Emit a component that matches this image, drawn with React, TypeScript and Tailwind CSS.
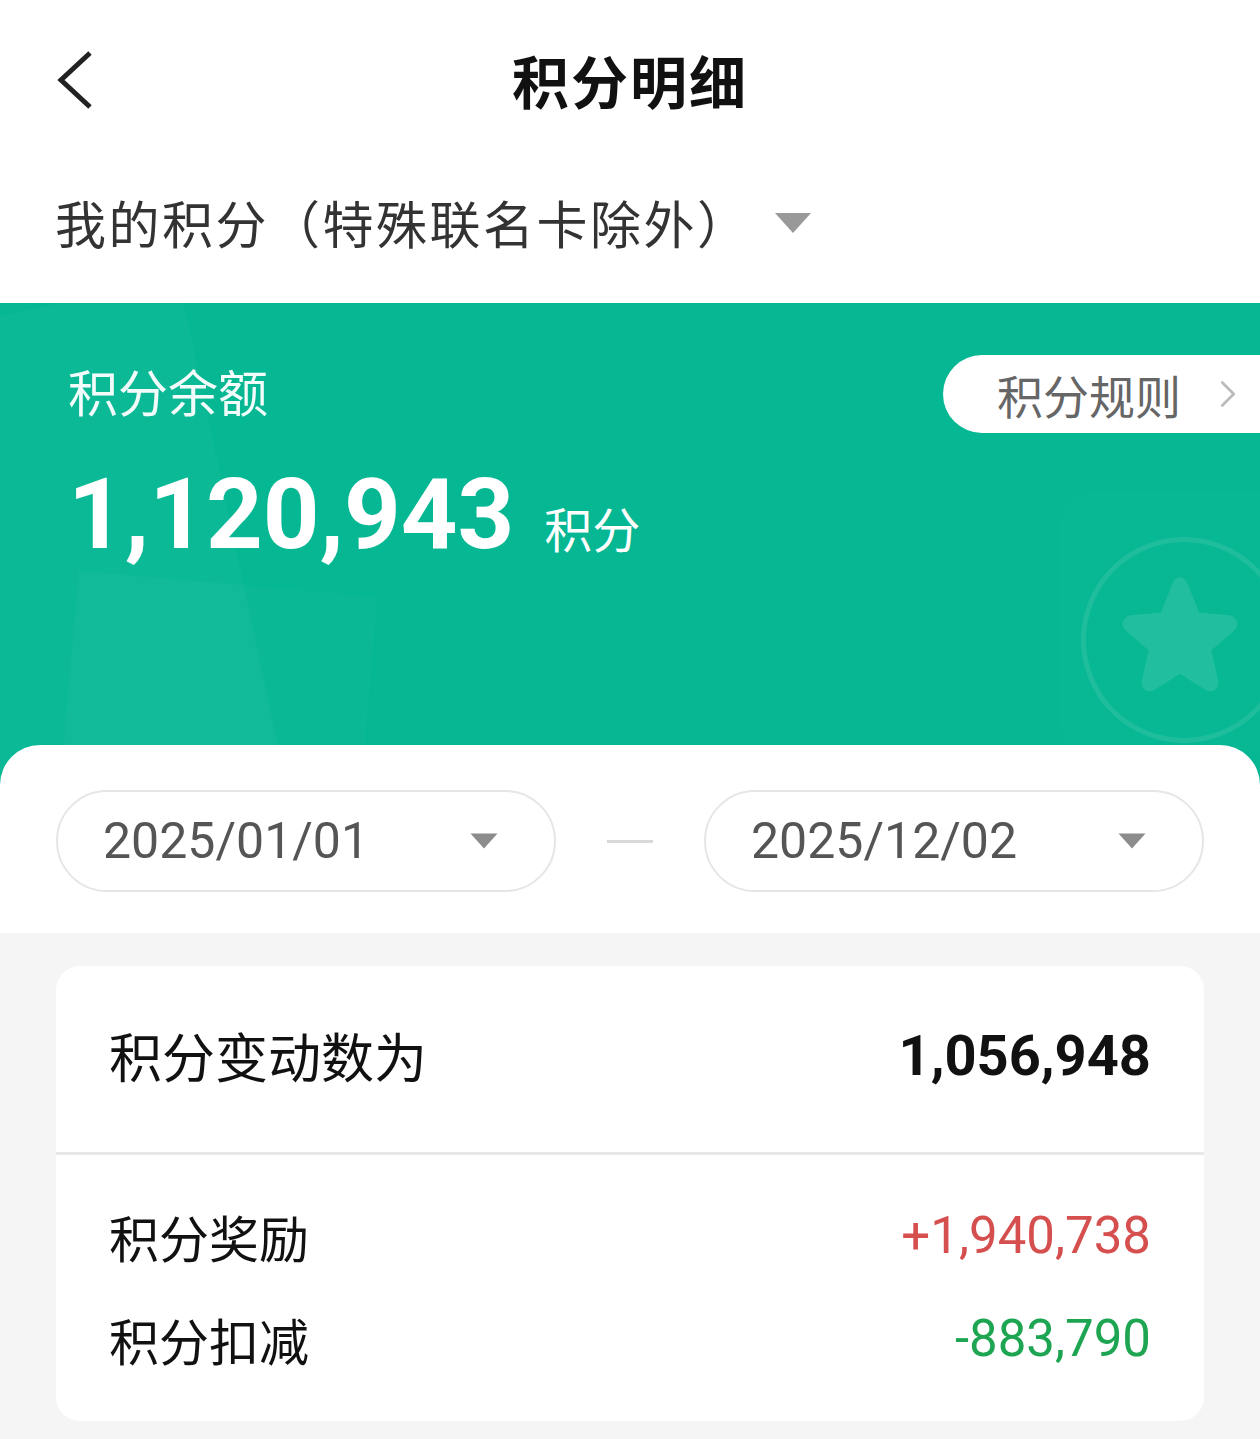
import { ChevronRight } from "lucide-react";

const cjk = "font-['Noto_Sans_CJK_SC','Noto_Sans',sans-serif]";
const num = "font-['Roboto','Noto_Sans_CJK_SC',sans-serif]";

const Caret = ({ className }: { className?: string }) => (
  <svg viewBox="0 0 40 24" className={className}>
    <path d="M2 2 L38 2 L20 22 Z" fill="currentColor" />
  </svg>
);

const DatePill = ({ value }: { value: string }) => (
  <div className="flex h-[102px] w-[500px] items-center justify-between rounded-full border-2 border-[#e6e6e6] pl-[45px] pr-[55px]">
    <span className={`${num} text-[50px] text-[#555]`}>{value}</span>
    <Caret className="h-[18px] w-[30px] text-[#8c8c8c]" />
  </div>
);

const StatRow = ({ label, value, color }: { label: string; value: string; color: string }) => (
  <div className="flex h-[103px] items-center justify-between px-[53px]">
    <span className={`${cjk} text-[50px] text-[#111]`}>{label}</span>
    <span className={`${num} text-[51px] ${color}`}>{value}</span>
  </div>
);

export default function App() {
  return (
    <div className={`${cjk} min-h-[1439px] w-full bg-[#f5f5f5]`}>
      <div className="bg-white">
        <div className="relative flex h-[160px] items-center justify-center">
          <svg viewBox="0 0 40 60" className="absolute left-[54px] top-[50px] h-[60px] w-[40px] text-[#222]">
            <path d="M36 3 L7 30 L36 57" fill="none" stroke="currentColor" strokeWidth="5" strokeLinejoin="miter" />
          </svg>
          <h1 className="text-[57px] font-bold tracking-[2px] text-[#111]">积分明细</h1>
        </div>
        <div className="flex h-[143px] items-center gap-[22px] pl-[55px] pb-[18px]">
          <span className="text-[51px] tracking-[2.5px] text-[#333]">我的积分（特殊联名卡除外）</span>
          <Caret className="h-[24px] w-[40px] text-[#999]" />
        </div>
      </div>

      <div className="relative h-[482px] overflow-hidden bg-[#05b793]">
        <div className="absolute -left-[60px] top-[0px] h-[560px] w-[300px] -rotate-[12deg] bg-white/[0.03]" />
        <div className="absolute left-[60px] top-[280px] h-[420px] w-[300px] rotate-[5deg] bg-white/[0.025]" />
        <div className="absolute right-[-60px] top-[190px] h-[260px] w-[260px] rounded-[30px] bg-white/[0.015]" />
        <div className="absolute left-[1081px] top-[234px] h-[206px] w-[206px] rounded-full border-[5px] border-white/[0.09]" />
        <svg viewBox="0 0 100 100" className="absolute left-[1112px] top-[266px] h-[136px] w-[136px] text-white/[0.1]">
          <path
            d="M50 6 C53 6 55 9 56 12 L64 32 L86 34 C92 35 94 41 90 45 L73 60 L78 82 C79 88 74 92 69 89 L50 77 L31 89 C26 92 21 88 22 82 L27 60 L10 45 C6 41 8 35 14 34 L36 32 L44 12 C45 9 47 6 50 6 Z"
            fill="currentColor"
          />
        </svg>

        <div className="relative flex items-start justify-between pt-[52px]">
          <div className="pl-[68px]">
            <div className="text-[50px] leading-[70px] text-white/95">积分余额</div>
            <div className="mt-[34px] flex items-baseline gap-[30px]">
              <span className={`${num} text-[99px] font-bold leading-[110px] text-white`}>1,120,943</span>
              <span className="text-[48px] text-white">积分</span>
            </div>
          </div>
          <div className="flex h-[78px] w-[317px] items-center gap-[24px] rounded-l-full bg-white pl-[54px]">
            <span className="text-[46px] text-[#666]">积分规则</span>
            <ChevronRight className="h-[46px] w-[46px] text-[#bbb]" strokeWidth={1.4} />
          </div>
        </div>
      </div>

      <div className="relative -mt-[40px] rounded-t-[40px] bg-white pb-[41px] pt-[45px]">
        <div className="flex items-center justify-between px-[56px]">
          <DatePill value="2025/01/01" />
          <div className="h-[3px] w-[46px] bg-[#d9d9d9]" />
          <DatePill value="2025/12/02" />
        </div>
      </div>

      <div className="px-[56px] pb-[19px] pt-[33px]">
        <div className="rounded-[24px] bg-white">
          <div className="flex h-[186px] items-center justify-between px-[53px] pb-[6px]">
            <span className="text-[53px] text-[#111]">积分变动数为</span>
            <span className={`${num} text-[56px] font-bold text-[#111]`}>1,056,948</span>
          </div>
          <div className="h-[3px] bg-[#e8e8e8]" />
          <div className="pb-[30px] pt-[30px]">
            <StatRow label="积分奖励" value="+1,940,738" color="text-[#d64f4f]" />
            <StatRow label="积分扣减" value="-883,790" color="text-[#1da552]" />
          </div>
        </div>
      </div>
    </div>
  );
}
